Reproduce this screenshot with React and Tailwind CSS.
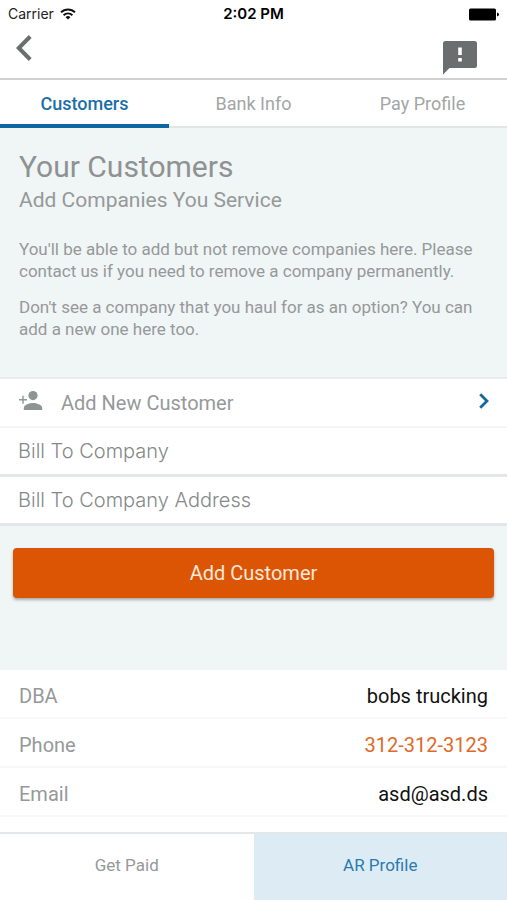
import { useState } from 'react';

const tabs = ['Customers', 'Bank Info', 'Pay Profile'];
const sections = ['Get Paid', 'AR Profile'];

function StatusBar() {
  return (
    <div className="grid h-7 grid-cols-[1fr_auto_1fr] items-center pr-2 pl-2 font-['Inter',sans-serif] text-[#222]">
      <div className="flex items-center gap-1.5 text-sm">
        <span>Carrier</span>
        <svg viewBox="0 0 16 12" className="h-3 w-4" fill="none" stroke="#111" strokeWidth="1.9">
          <path d="M1 4.4a10 10 0 0 1 14 0" />
          <path d="M3.6 7.2a6.3 6.3 0 0 1 8.8 0" />
          <path d="M8 11.6 5.6 9.2a3.4 3.4 0 0 1 4.8 0z" fill="#111" stroke="none" />
        </svg>
      </div>
      <span className="text-center text-[15px] font-semibold text-black">2:02 PM</span>
      <svg viewBox="0 0 30 13" className="h-[13px] w-[30px] justify-self-end">
        <rect width="27" height="12" y="0.5" rx="1.5" fill="#000" />
        <path d="M28 4.5q2 .6 2 2t-2 2z" fill="#000" />
      </svg>
    </div>
  );
}

function FeedbackIcon() {
  return (
    <svg viewBox="0 0 34 34" className="size-[34px]">
      <path d="M2.5 0h29A2.5 2.5 0 0 1 34 2.5v22a2.5 2.5 0 0 1-2.5 2.5H6.5L0 33.5v-31A2.5 2.5 0 0 1 2.5 0z" fill="#6b6e6e" />
      <path d="M15.2 6.5h3.6v7.5h-3.6zM15.2 17h3.6v3.6h-3.6z" fill="#fff" />
    </svg>
  );
}

function PersonAddIcon() {
  return (
    <svg viewBox="0 0 24 20" className="h-5 w-6" fill="#919494">
      <circle cx="14" cy="4.6" r="4.6" />
      <path d="M4.8 19v-2c0-3.4 6-5 9.2-5s9.2 1.6 9.2 5v2z" />
      <path d="M3.3 4.7h1.4v3.3H8v1.4H4.7v3.3H3.3V9.4H0V8h3.3z" />
    </svg>
  );
}

function TextField({ label, value, onChange }) {
  return (
    <input
      type="text"
      aria-label={label}
      placeholder={label}
      value={value}
      onChange={(e) => onChange(e.target.value)}
      className="block h-[49px] w-full border-b-3 border-[#e3e6e6] bg-white px-[18px] font-['Inter',sans-serif] text-xl font-light outline-none placeholder:text-[#858888]"
    />
  );
}

function DetailRow({ label, children }) {
  return (
    <div className="flex h-[49px] items-center justify-between border-b-2 border-[#f7f9f9] px-[19px] pt-1 text-xl">
      <dt className="text-[#969999]">{label}</dt>
      <dd className="text-[#111]">{children}</dd>
    </div>
  );
}

export default function App() {
  const [tab, setTab] = useState('Customers');
  const [section, setSection] = useState('AR Profile');
  const [company, setCompany] = useState('');
  const [address, setAddress] = useState('');

  return (
    <div className="flex min-h-screen flex-col bg-white font-['Roboto',sans-serif] text-[#969999]">
      <StatusBar />

      <header className="flex h-[52px] items-start justify-between border-b-2 border-[#cfd1d1] pr-[30px] pl-4">
        <button type="button" aria-label="Back" className="pt-[7px]">
          <svg viewBox="0 0 16 26" className="h-[26px] w-4" fill="none" stroke="#6b6e6e" strokeWidth="4">
            <path d="M14.2 1.5 2.8 13l11.4 11.5" />
          </svg>
        </button>
        <button type="button" aria-label="Feedback" className="pt-[13px]">
          <FeedbackIcon />
        </button>
      </header>

      <nav className="grid h-12 grid-cols-3 text-lg">
        {tabs.map((name) => (
          <button
            key={name}
            type="button"
            onClick={() => setTab(name)}
            className={
              name === tab
                ? 'border-b-4 border-[#0d67a1] pt-1 font-medium text-[#1b6fa8]'
                : 'border-b-2 border-[#e3e6e6] pt-0.5 text-[#a3a5a5]'
            }
          >
            {name}
          </button>
        ))}
      </nav>

      <main>
        <section className="bg-[#f0f5f6] px-[19px] pt-[19px] pb-[37px]">
          <h1 className="text-3xl leading-10 text-[#8f9292]">Your Customers</h1>
          <h2 className="text-[21px] leading-[26px]">Add Companies You Service</h2>
          <p className="mt-[25px] text-[17px] leading-[22px]">
            You&apos;ll be able to add but not remove companies here. Please contact us if you need to
            remove a company permanently.
          </p>
          <p className="mt-[14px] text-[17px] leading-[22px]">
            Don&apos;t see a company that you haul for as an option? You can add a new one here too.
          </p>
        </section>

        <form className="bg-[#f0f5f6]" onSubmit={(e) => e.preventDefault()}>
          <button
            type="button"
            className="flex h-[51px] w-full items-center border-y-2 border-t-[#e8ebeb] border-b-[#f4f6f6] bg-white pr-[18px] pb-1 pl-[19px] text-xl"
          >
            <PersonAddIcon />
            <span className="ml-[18px] pt-1">Add New Customer</span>
            <svg viewBox="0 0 10 16" className="ml-auto h-4 w-2.5" fill="none" stroke="#17689f" strokeWidth="2.8">
              <path d="M1.2 1.2 8 8l-6.8 6.8" />
            </svg>
          </button>
          <TextField label="Bill To Company" value={company} onChange={setCompany} />
          <TextField label="Bill To Company Address" value={address} onChange={setAddress} />
          <div className="px-[13px] pt-[22px] pb-[72px]">
            <button
              type="submit"
              className="h-[50px] w-full rounded bg-[#dc5505] text-xl text-[#fbe9da] shadow-[0_2px_3px_rgba(0,0,0,0.3)]"
            >
              Add Customer
            </button>
          </div>
        </form>

        <dl>
          <DetailRow label="DBA">bobs trucking</DetailRow>
          <DetailRow label="Phone">
            <a href="tel:312-312-3123" className="text-[#de6a29]">312-312-3123</a>
          </DetailRow>
          <DetailRow label="Email">asd@asd.ds</DetailRow>
        </dl>
      </main>

      <footer className="mt-auto grid h-[68px] grid-cols-2 border-t-2 border-[#e2e7ea] text-[17px]">
        {sections.map((name) => (
          <button
            key={name}
            type="button"
            onClick={() => setSection(name)}
            className={name === section ? 'bg-[#ddecf4] pb-0.5 text-[#2b7ab0]' : 'bg-white pb-0.5'}
          >
            {name}
          </button>
        ))}
      </footer>
    </div>
  );
}
